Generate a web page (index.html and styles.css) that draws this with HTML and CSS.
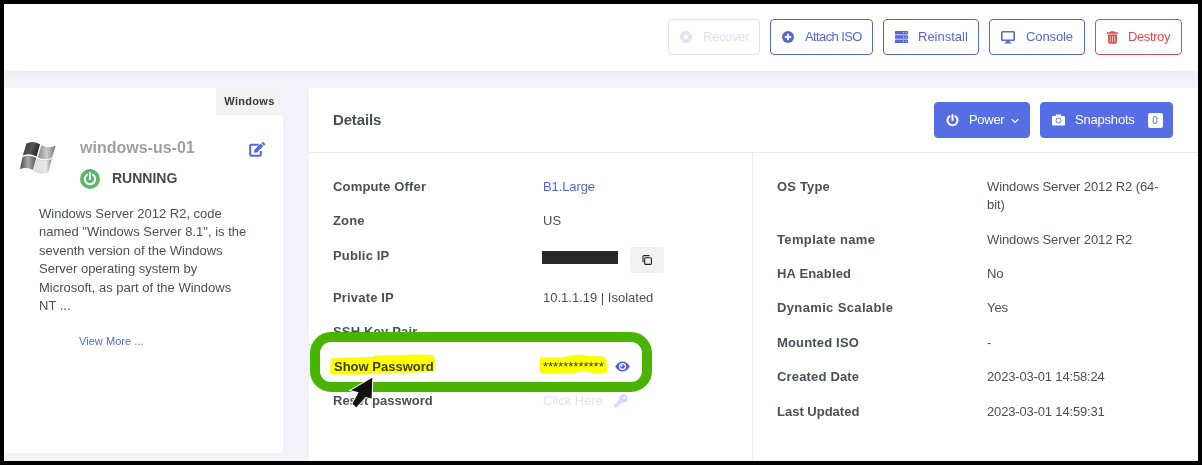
FILE: index.html
```html
<!DOCTYPE html>
<html lang="en">
<head>
<meta charset="utf-8">
<title>windows-us-01</title>
<link rel="stylesheet" href="styles.css">
</head>
<body>
<div class="frame">
  <header class="toolbar">
    <button class="btn disabled" style="width:92px"><svg width="12" height="12" viewBox="0 0 12 12"><circle cx="6" cy="6" r="4.1" fill="none" stroke="currentColor" stroke-width="3.8"/><path d="M2 2l2.4 2.4M10 2L7.600 4.400M2 10l2.400-2.400M10 10L7.600 7.600" stroke="#fff" stroke-width=".9"/></svg><span class="t-recover">Recover</span></button>
    <button class="btn" style="width:103px"><svg width="12" height="12" viewBox="0 0 12 12"><circle cx="6" cy="6" r="6" fill="currentColor"/><path d="M6 2.800v6.400M2.800 6h6.400" stroke="#fff" stroke-width="1.900"/></svg><span class="t-attach">Attach ISO</span></button>
    <button class="btn" style="width:96px"><svg width="13" height="12" viewBox="0 0 13 12"><g fill="currentColor"><rect width="13" height="3.400" rx=".5"/><rect y="4.300" width="13" height="3.400" rx=".5"/><rect y="8.600" width="13" height="3.400" rx=".5"/></g><path d="M8 1.700h1M10.500 1.700h1M8 6h1M10.500 6h1M8 10.300h1M10.500 10.300h1" stroke="#fff" stroke-width=".8"/></svg><span>Reinstall</span></button>
    <button class="btn" style="width:96px"><svg width="14" height="13" viewBox="0 0 14 13"><rect x=".8" y=".8" width="12.400" height="8.400" rx=".8" fill="none" stroke="currentColor" stroke-width="1.600"/><path d="M5.700 9.500h2.600l.5 1.700h1.400v1.400H3.800v-1.400h1.400z" fill="currentColor"/></svg><span class="t-console">Console</span></button>
    <button class="btn danger" style="width:87px"><svg width="11" height="13" viewBox="0 0 11 13"><path d="M0 1.200h3.200L3.900.2h3.200l.7 1H11v1.600H0zM.8 3.500h9.400l-.5 8.200a1.200 1.200 0 0 1-1.200 1.100h-6a1.200 1.200 0 0 1-1.200-1.100z" fill="currentColor"/><path d="M3.300 5v6.300M5.500 5v6.300M7.700 5v6.300" stroke="#fff" stroke-width=".6"/></svg><span class="t-destroy">Destroy</span></button>
  </header>
  <main class="content">
    <aside class="card side">
      <div class="tag">Windows</div>
      <div class="vm">
        <svg class="winlogo" width="36" height="33" viewBox="0 0 36 33">
          <defs>
            <linearGradient id="a" x2="1" y2=".4"><stop stop-color="#303030"/><stop offset=".6" stop-color="#555"/><stop offset="1" stop-color="#222"/></linearGradient>
            <linearGradient id="b" x2="1"><stop stop-color="#888"/><stop offset=".5" stop-color="#ccc"/><stop offset="1" stop-color="#777"/></linearGradient>
            <linearGradient id="c" x2="1"><stop stop-color="#444"/><stop offset=".5" stop-color="#aaa"/><stop offset="1" stop-color="#555"/></linearGradient>
            <linearGradient id="d" x2="1"><stop stop-color="#ddd"/><stop offset=".7" stop-color="#e8e8e8"/><stop offset="1" stop-color="#888"/></linearGradient>
          </defs>
          <path d="M6.500 2.500Q12.500-1 20 3.200L16.600 15.500Q9.500 11.500 2.800 14.600z" fill="url(#a)"/>
          <path d="M21.300 4Q28 8 35.700 4.800L32 16.800Q24.500 20 17.800 16.200z" fill="url(#b)"/>
          <path d="M2.500 16Q9 13 16.200 16.800L13 29Q6.500 25.500 0 28z" fill="url(#c)"/>
          <path d="M17.400 17.700Q24.500 21.300 31.600 18.300L28.200 30.500Q21 34 14 29.700z" fill="url(#d)" stroke="#aaa" stroke-width=".4"/>
        </svg>
        <div class="vm-info">
          <div class="vm-name"><span>windows-us-01</span>
            <svg width="17" height="15" viewBox="0 0 17 15"><path d="M9.700 2.700H2.200a1 1 0 0 0-1 1v9a1 1 0 0 0 1 1h8.600a1 1 0 0 0 1-1V9" fill="none" stroke="#5468e0" stroke-width="2"/><path d="M5 10.700l.4-2.900 6.300-6.300 2.600 2.600-6.300 6.300zM12.400.9l.7-.6q.7-.5 1.300 0l1.500 1.500q.5.600 0 1.200l-.8.700z" fill="#5468e0"/></svg>
          </div>
          <div class="vm-state"><svg width="20" height="20" viewBox="0 0 20 20"><circle cx="10" cy="10" r="10" fill="#5db56a"/><path d="M7 5.800a5.200 5.200 0 1 0 6 0M10 4v6" fill="none" stroke="#fff" stroke-width="2" stroke-linecap="round"/></svg><span>RUNNING</span></div>
        </div>
      </div>
      <p class="desc">Windows Server 2012 R2, code<br>named "Windows Server 8.1", is the<br>seventh version of the Windows<br>Server operating system by<br>Microsoft, as part of the Windows<br>NT ...</p>
      <a class="more">View More ...</a>
    </aside>
    <section class="card details">
      <div class="details-head">
        <h2>Details</h2>
        <button class="btn solid" style="width:96px"><svg width="13" height="13" viewBox="0 0 13 13"><path d="M3.500 2.300a5 5 0 1 0 6 0M6.500.9v5.300" fill="none" stroke="#fff" stroke-width="2" stroke-linecap="round"/></svg><span class="t-power">Power</span><svg class="caret" width="8" height="6" viewBox="0 0 8 6"><path d="M.7 1.200L4 4.400l3.300-3.200" fill="none" stroke="#fff" stroke-width="1.200"/></svg></button>
        <button class="btn solid" style="width:133px"><svg width="13" height="12" viewBox="0 0 13 12"><path d="M1.200 2h2.300L4.200.4h4.600L9.500 2h2.300Q13 2 13 3.200v7q0 1.200-1.200 1.200H1.200Q0 11.400 0 10.200v-7Q0 2 1.200 2z" fill="#fff"/><circle cx="6.500" cy="6.500" r="2.500" fill="none" stroke="#556ee6" stroke-width=".9"/></svg><span class="t-snap">Snapshots</span><b class="count">0</b></button>
      </div>
      <div class="cols">
        <dl class="list left">
          <div class="row"><dt>Compute Offer</dt><dd><a>B1.Large</a></dd></div>
          <div class="row"><dt>Zone</dt><dd>US</dd></div>
          <div class="row ip"><dt>Public IP</dt><dd><i class="redacted"></i><button class="copy"><svg width="10" height="10" viewBox="0 0 10 10" fill="none" stroke="#222" stroke-width="1.100"><rect x="2.700" y="2.700" width="6.700" height="6.700" rx="1"/><path d="M1 7.200V1.600Q1 .6 2 .6h5.500"/></svg></button></dd></div>
          <div class="row"><dt>Private IP</dt><dd>10.1.1.19 | Isolated</dd></div>
          <div class="row"><dt>SSH Key Pair</dt><dd></dd></div>
          <div class="row pw"><dt>Show Password</dt><dd><span class="stars">************</span><svg width="15" height="11" viewBox="0 0 15 11"><path d="M.2 5.500Q3 .5 7.500.5t7.300 5q-2.800 5-7.300 5t-7.300-5z" fill="#5468c8"/><circle cx="7.500" cy="5.500" r="3.500" fill="#fff"/><circle cx="7.500" cy="5.500" r="2.300" fill="#5468c8"/><circle cx="6.700" cy="4.600" r=".9" fill="#fff"/></svg></dd></div>
          <div class="row reset"><dt>Reset password</dt><dd><span>Click Here</span><svg width="14" height="14" viewBox="0 0 14 14"><path d="M9.500.3a4.200 4.200 0 1 1-1.200 8.200L7.200 9.600H5.900v1.300H4.600v1.300L3.300 13.500H.4v-2.700l4.900-5A4.200 4.200 0 0 1 9.500.3z" fill="#d6d9f4"/><circle cx="10.400" cy="3.600" r="1.200" fill="#fff"/></svg></dd></div>
        </dl>
        <dl class="list right">
          <div class="row"><dt>OS Type</dt><dd>Windows Server 2012 R2 (64-<br>bit)</dd></div>
          <div class="row"><dt class="wide">Template name</dt><dd>Windows Server 2012 R2</dd></div>
          <div class="row"><dt>HA Enabled</dt><dd>No</dd></div>
          <div class="row"><dt class="wide">Dynamic Scalable</dt><dd>Yes</dd></div>
          <div class="row"><dt>Mounted ISO</dt><dd>-</dd></div>
          <div class="row"><dt>Created Date</dt><dd class="num">2023-03-01 14:58:24</dd></div>
          <div class="row"><dt class="normal">Last Updated</dt><dd class="num">2023-03-01 14:59:31</dd></div>
        </dl>
      </div>
    </section>
  </main>
</div>
<svg class="marker" width="342" height="90" viewBox="310 325 342 90">
  <path d="M331 358.500L350 357.500 372 357 375 355.500 420 354.500 433 355 435 359 434.500 371 418 372.500 372 373 368 374.500 332 374.500 330 372z" fill="#ff0"/>
  <path d="M540 357.500L563 357.500 570 355.500 580 354.500 590 356 604 356.500 606.500 360 607 372.500 597 374 584 370.500 574 373 542 374 539.500 371z" fill="#ff0"/>
</svg>
<div class="callout"></div>
<svg class="cursor" width="30" height="36" viewBox="347 374 30 36"><path d="M372.300 377.800L351 390.300 358.600 392.200 352.500 403.800 356.300 407.200 365.800 397 371.600 398.600z" fill="#111" stroke="#fff" stroke-width="2" paint-order="stroke"/></svg>
</body>
</html>
```
FILE: styles.css
```css
* { box-sizing: border-box; }
body { margin: 0; width: 1202px; height: 465px; overflow: hidden; position: relative; font: 13px/18.2px "Liberation Sans", Arial, sans-serif; color: #495057; }
.frame { width: 1202px; height: 465px; border: 4px solid #000; background: #f3f2f8; display: flex; flex-direction: column; overflow: hidden; }
.toolbar { position: relative; height: 67px; flex: none; background: #fff; display: flex; justify-content: flex-end; gap: 10px; padding: 15px 16px 0 0; box-shadow: 0 3px 14px rgba(18, 38, 63, .03); }
.btn { height: 36px; border: 1px solid #556ad0; border-radius: 4px; background: #fff; color: #5468d6; font: 13px/18px "Liberation Sans", Arial, sans-serif; padding: 0 0 0 11px; display: flex; align-items: center; white-space: nowrap; }
.btn svg { flex: none; }
.btn span { margin-left: 10px; }
.btn .t-recover { margin-left: 11px; letter-spacing: -.3px; }
.btn .t-attach { letter-spacing: -.6px; margin-left: 11px; }
.btn .t-console { margin-left: 11px; letter-spacing: -.1px; }
.btn .t-destroy { letter-spacing: -.4px; }
.btn .t-power { letter-spacing: -.3px; }
.btn .t-snap { letter-spacing: -.2px; }
.disabled { color: #dfe1f5; border-color: #e2e3f2; }
.danger { color: #d5504f; border-color: #c9545c; }
.content { display: flex; gap: 26px; padding-top: 17px; flex: 1; min-height: 0; }
.card { background: #fff; }
.side { width: 279px; height: 365px; }
.tag { width: 67px; height: 27px; margin-left: auto; background: #f2f2f2; color: #343a40; font-weight: bold; font-size: 11px; line-height: 27px; text-align: center; letter-spacing: .3px; }
.vm { display: flex; padding: 23px 17px 0 16px; }
.winlogo { margin-top: 3px; flex: none; }
.vm-info { flex: 1; margin-left: 24px; }
.vm-name { display: flex; justify-content: space-between; align-items: center; height: 20px; font-size: 16px; font-weight: bold; color: #a0a0a0; }
.vm-name svg { margin-top: 2px; }
.vm-state { display: flex; align-items: center; gap: 12px; margin-top: 11px; font-size: 14px; font-weight: bold; color: #444a50; }
.vm-state span { margin-top: -2px; }
.desc { margin: 16px 0 0 35px; line-height: 18.4px; white-space: nowrap; }
.more { display: block; margin: 17px 0 0 75px; font-size: 11px; color: #5468cc; letter-spacing: .05px; }
.details { flex: 1; display: flex; flex-direction: column; }
.details-head { height: 65px; flex: none; display: flex; align-items: center; gap: 10px; padding: 0 25px 0 24px; border-bottom: 1px solid #ececef; }
.details-head h2 { margin: 0 auto 0 0; font-size: 15px; letter-spacing: -.15px; color: #495057; }
.solid { background: #556ee6; border-color: #556ee6; color: #fff; }
.solid .caret { margin: 2px 0 0 7px; }
.count { margin-left: 13px; width: 15px; height: 15px; border-radius: 2px; background: #fff; color: #556ac8; font: 10px/15px "Liberation Sans", Arial, sans-serif; text-align: center; }
.cols { display: flex; flex: 1; }
.list { margin: 0; padding: 17px 0 0 24px; }
.left { width: 444px; border-right: 1px solid #ececef; }
.right { flex: 1; }
.row { display: flex; padding: 8.1px 0; }
dt { width: 210px; flex: none; font-weight: bold; letter-spacing: .17px; }
.wide { letter-spacing: .36px; }
.normal, .pw dt, .reset dt { letter-spacing: 0; }
dd { margin: 0; white-space: nowrap; display: block; }
.right dd { letter-spacing: -.1px; }
.right .num { letter-spacing: -.16px; }
a { color: #5468cc; }
.left dd a { letter-spacing: -.1px; }
.ip { height: 42px; }
.ip dd { display: flex; margin-top: -1px; }
.redacted { width: 76px; height: 13px; margin: 5px 0 0 -1px; background: #282828; }
.copy { width: 34px; height: 26px; border: 0; border-radius: 3px; background: #f1f1f1; margin: 1px 0 0 12px; padding: 0; display: flex; align-items: center; justify-content: center; }
.pw { color: #3c4248; }
.pw dt { padding-left: 1px; }
.pw dd, .reset dd { display: flex; align-items: center; }
.pw svg { margin-left: 11px; }
.reset span { color: #dfe1f5; width: 71px; }
.marker { position: absolute; left: 310px; top: 325px; mix-blend-mode: multiply; }
.callout { position: absolute; left: 310px; top: 332px; width: 342px; height: 60px; border: 10px solid #49b400; border-radius: 21px; }
.cursor { position: absolute; left: 347px; top: 374px; }
```
